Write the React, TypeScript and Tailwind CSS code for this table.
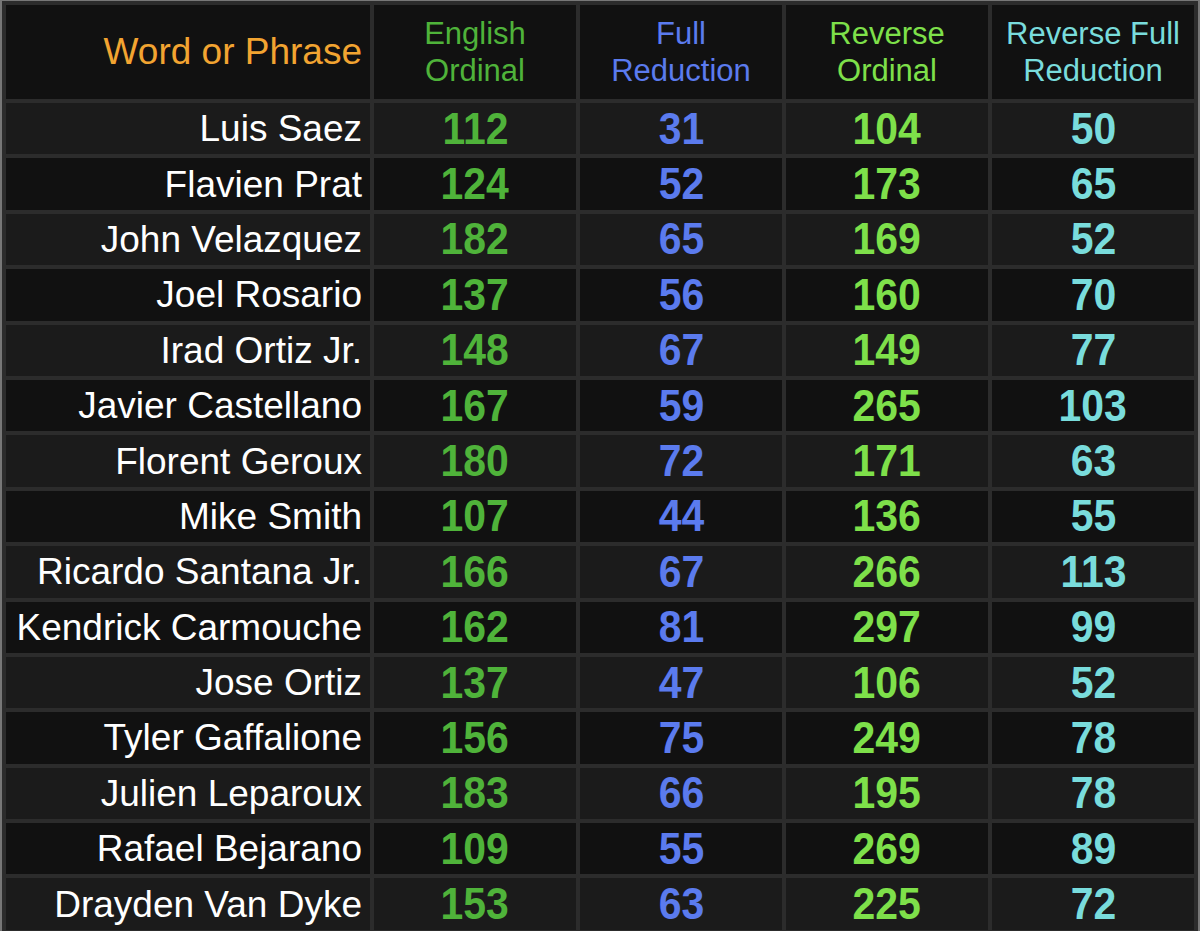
const rows: [string, number, number, number, number][] = [
  ["Luis Saez", 112, 31, 104, 50],
  ["Flavien Prat", 124, 52, 173, 65],
  ["John Velazquez", 182, 65, 169, 52],
  ["Joel Rosario", 137, 56, 160, 70],
  ["Irad Ortiz Jr.", 148, 67, 149, 77],
  ["Javier Castellano", 167, 59, 265, 103],
  ["Florent Geroux", 180, 72, 171, 63],
  ["Mike Smith", 107, 44, 136, 55],
  ["Ricardo Santana Jr.", 166, 67, 266, 113],
  ["Kendrick Carmouche", 162, 81, 297, 99],
  ["Jose Ortiz", 137, 47, 106, 52],
  ["Tyler Gaffalione", 156, 75, 249, 78],
  ["Julien Leparoux", 183, 66, 195, 78],
  ["Rafael Bejarano", 109, 55, 269, 89],
  ["Drayden Van Dyke", 153, 63, 225, 72],
];

const numColors = ["text-[#4fb33a]", "text-[#5b7bee]", "text-[#7ee04a]", "text-[#79dcdc]"];

export default function App() {
  return (
    <div className="h-[931px] w-[1200px] overflow-hidden bg-[#2c2c2c] font-['Liberation_Sans',Arial,sans-serif]">
      <div className="border-x-2 border-t border-[#777]">
        <table className="table-fixed border-separate border-spacing-1 bg-[#2c2c2c]">
          <colgroup>
            <col className="w-[364px]" />
            <col className="w-[202px]" />
            <col className="w-[202px]" />
            <col className="w-[202px]" />
            <col className="w-[202px]" />
          </colgroup>
          <thead>
            <tr className="h-[94px] bg-[#111]">
              <th className="pr-2 text-right text-[37px] font-normal text-[#f2a431]">Word or Phrase</th>
              <th className="text-center text-[31px] leading-[37px] font-normal text-[#4fb33a]">English<br />Ordinal</th>
              <th className="text-center text-[31px] leading-[37px] font-normal text-[#5b7bee]">Full<br />Reduction</th>
              <th className="text-center text-[31px] leading-[37px] font-normal text-[#7ee04a]">Reverse<br />Ordinal</th>
              <th className="text-center text-[31px] leading-[37px] font-normal text-[#79dcdc]">Reverse Full<br />Reduction</th>
            </tr>
          </thead>
          <tbody>
            {rows.map(([name, ...nums], i) => (
              <tr key={name} className={i % 2 === 0 ? "h-[51.4px] bg-[#1b1b1b]" : "h-[51.4px] bg-[#111]"}>
                <td className="whitespace-nowrap pr-2 text-right text-[37px] leading-none text-white">{name}</td>
                {nums.map((n, j) => (
                  <td key={j} className={`text-center text-[44px] font-bold leading-none ${numColors[j]}`}>
                    <span className="inline-block scale-x-[0.93]">{n}</span>
                  </td>
                ))}
              </tr>
            ))}
          </tbody>
        </table>
      </div>
    </div>
  );
}
